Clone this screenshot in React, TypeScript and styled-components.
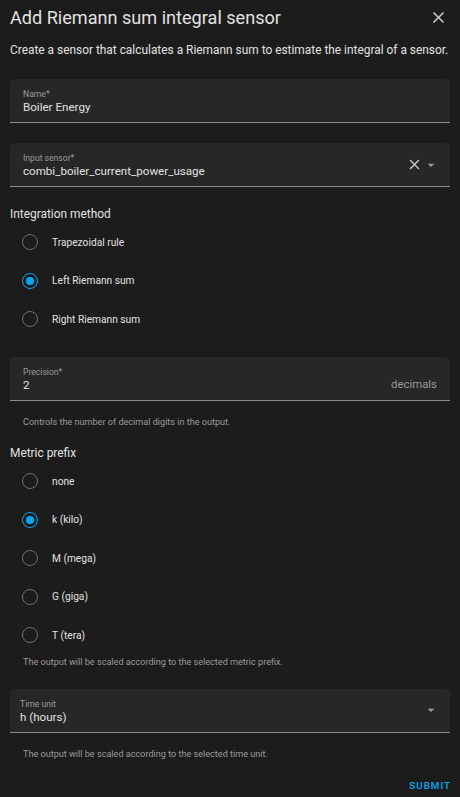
import React from "react";
import styled, { createGlobalStyle } from "styled-components";

const GlobalStyle = createGlobalStyle`
  body {
    margin: 0;
    background: #1c1c1c;
    font-family: Roboto, "Liberation Sans", sans-serif;
    color: #e1e1e1;
  }
`;

const Dialog = styled.div`
  width: 460px;
  height: 797px;
  box-sizing: border-box;
  padding: 0 10px;
  background: #1c1c1c;
  display: flex;
  flex-direction: column;
`;

const Header = styled.div`
  display: flex;
  justify-content: space-between;
  align-items: center;
  height: 35px;
`;

const Title = styled.h2`
  margin: 0;
  font-size: 18.1px;
  font-weight: 400;
  color: #e1e1e1;
`;

const Close = styled.button`
  background: none;
  border: none;
  padding: 0;
  margin-right: 2px;
  width: 19px;
  height: 19px;
  display: flex;
  cursor: pointer;
`;

const Description = styled.p`
  margin: 7px 0 0;
  font-size: 11.9px;
  line-height: 16px;
  color: #e1e1e1;
  white-space: nowrap;
`;

const Field = styled.div<{ $mt: number; $pad?: number }>`
  margin-top: ${(p) => p.$mt}px;
  height: 44px;
  box-sizing: border-box;
  background: #272727;
  border-radius: 4px 4px 0 0;
  border-bottom: 1px solid #8d8d8d;
  display: flex;
  align-items: center;
  padding: 0 11px 0 ${(p) => (p.$pad === undefined ? 13 : p.$pad)}px;
`;

const FieldBody = styled.div`
  flex: 1;
  display: flex;
  flex-direction: column;
  padding-top: 2px;
`;

const Label = styled.span`
  font-size: 8.6px;
  color: #9a9a9a;
  line-height: 12px;
`;

const Value = styled.span`
  font-size: 11.6px;
  color: #e1e1e1;
  line-height: 15px;
`;

const Suffix = styled.span`
  font-size: 11.4px;
  color: #9a9a9a;
  margin-top: 12px;
  margin-right: 2px;
`;

const Icons = styled.div`
  display: flex;
  align-items: center;
`;

const SectionTitle = styled.div<{ $mt: number }>`
  margin-top: ${(p) => p.$mt}px;
  font-size: 11.9px;
  line-height: 16px;
  color: #e1e1e1;
`;

const RadioList = styled.div<{ $mt: number }>`
  margin-top: ${(p) => p.$mt}px;
  display: flex;
  flex-direction: column;
`;

const RadioRow = styled.label`
  display: flex;
  align-items: center;
  height: 38.6px;
  padding-left: 12px;
  gap: 14px;
  font-size: 10.2px;
  color: #e1e1e1;
`;

const RadioCircle = styled.span<{ $on?: boolean }>`
  width: 16px;
  height: 16px;
  box-sizing: border-box;
  border-radius: 50%;
  border: 1.5px solid ${(p) => (p.$on ? "#03a9f4" : "#6f6f6f")};
  display: flex;
  align-items: center;
  justify-content: center;
  &::after {
    content: "";
    width: 8px;
    height: 8px;
    border-radius: 50%;
    background: ${(p) => (p.$on ? "#03a9f4" : "transparent")};
  }
`;

const Helper = styled.div<{ $mt: number }>`
  margin-top: ${(p) => p.$mt}px;
  padding-left: 13px;
  font-size: 9.1px;
  line-height: 12px;
  color: #9a9a9a;
`;

const Footer = styled.div`
  margin-top: auto;
  display: flex;
  justify-content: flex-end;
  padding-bottom: 6px;
`;

const Submit = styled.button`
  background: none;
  border: none;
  padding: 0;
  margin-right: -1px;
  color: #03a9f4;
  font-family: Roboto, sans-serif;
  font-weight: 500;
  font-size: 9.8px;
  letter-spacing: 1px;
  cursor: pointer;
`;

const XIcon = ({ size, color }: { size: number; color: string }) => (
  <svg width={size} height={size} viewBox="0 0 24 24">
    <path
      d="M19 6.41 17.59 5 12 10.59 6.41 5 5 6.41 10.59 12 5 17.59 6.41 19 12 13.41 17.59 19 19 17.59 13.41 12z"
      fill={color}
    />
  </svg>
);

const Caret = () => (
  <svg width="16" height="16" viewBox="0 0 24 24">
    <path d="M7 10l5 5 5-5z" fill="#9a9a9a" />
  </svg>
);

const Radio = ({ label, on }: { label: string; on?: boolean }) => (
  <RadioRow>
    <RadioCircle $on={on} />
    {label}
  </RadioRow>
);

export default function App() {
  return (
    <>
      <GlobalStyle />
      <Dialog>
        <Header>
          <Title>Add Riemann sum integral sensor</Title>
          <Close>
            <XIcon size={19} color="#c8c8c8" />
          </Close>
        </Header>
        <Description>
          Create a sensor that calculates a Riemann sum to estimate the integral of a sensor.
        </Description>

        <Field $mt={21}>
          <FieldBody>
            <Label>Name*</Label>
            <Value>Boiler Energy</Value>
          </FieldBody>
        </Field>

        <Field $mt={20}>
          <FieldBody>
            <Label>Input sensor*</Label>
            <Value>combi_boiler_current_power_usage</Value>
          </FieldBody>
          <Icons>
            <XIcon size={17} color="#c8c8c8" />
            <Caret />
          </Icons>
        </Field>

        <SectionTitle $mt={19}>Integration method</SectionTitle>
        <RadioList $mt={1}>
          <Radio label="Trapezoidal rule" />
          <Radio label="Left Riemann sum" on />
          <Radio label="Right Riemann sum" />
        </RadioList>

        <Field $mt={18}>
          <FieldBody>
            <Label>Precision*</Label>
            <Value>2</Value>
          </FieldBody>
          <Suffix>decimals</Suffix>
        </Field>
        <Helper $mt={15}>Controls the number of decimal digits in the output.</Helper>

        <SectionTitle $mt={17}>Metric prefix</SectionTitle>
        <RadioList $mt={1}>
          <Radio label="none" />
          <Radio label="k (kilo)" on />
          <Radio label="M (mega)" />
          <Radio label="G (giga)" />
          <Radio label="T (tera)" />
        </RadioList>
        <Helper $mt={1}>The output will be scaled according to the selected metric prefix.</Helper>

        <Field $mt={21} $pad={10}>
          <FieldBody>
            <Label>Time unit</Label>
            <Value>h (hours)</Value>
          </FieldBody>
          <Icons>
            <Caret />
          </Icons>
        </Field>
        <Helper $mt={15}>The output will be scaled according to the selected time unit.</Helper>

        <Footer>
          <Submit>SUBMIT</Submit>
        </Footer>
      </Dialog>
    </>
  );
}
